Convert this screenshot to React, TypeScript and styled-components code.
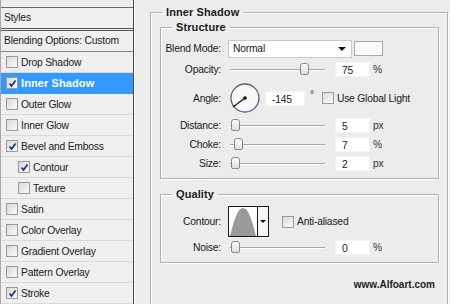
import React from 'react';
import styled, { createGlobalStyle } from 'styled-components';

const GlobalStyle = createGlobalStyle`
  html, body {
    margin: 0;
    padding: 0;
    background: #ececec;
    overflow: hidden;
  }
  body {
    font-family: Tahoma, "Liberation Sans", Arial, sans-serif;
    font-size: 10.3px;
    letter-spacing: -0.2px;
    color: #1a1a1a;
  }
`;

const Dialog = styled.div`
  display: flex;
  width: 450px;
  height: 304px;
  overflow: hidden;
  background: #ececec;
`;

const Sidebar = styled.div`
  width: 132px;
  flex: none;
  padding-top: 7px;
  border-left: 1px solid #a8a8a8;
  border-right: 1px solid #4a4a4a;
  box-shadow: 1px 0 0 #fff;
  display: flex;
  flex-direction: column;
`;

const StylesHead = styled.div`
  height: 20px;
  line-height: 20px;
  padding-left: 3px;
  border-top: 1px solid #6a6a6a;
  border-bottom: 1px solid #5a5a5a;
  background: #efefef;
`;

const ListTop = styled.div`
  height: 1px;
  margin-top: 1px;
  background: #5a5a5a;
`;

const BlendRow = styled.div`
  height: 20px;
  line-height: 20px;
  padding-left: 3px;
  border-bottom: 1px solid #8a8a8a;
  background: #efefef;
`;

const Row = styled.div<{ $active?: boolean; $indent?: boolean }>`
  height: 20px;
  flex: none;
  display: flex;
  align-items: center;
  gap: 3px;
  padding-left: ${p => (p.$indent ? 17 : 5)}px;
  border-bottom: 1px solid ${p => (p.$active ? '#3399ff' : '#dadada')};
  background: ${p => (p.$active ? '#3399ff' : '#efefef')};
  color: ${p => (p.$active ? '#fff' : '#1a1a1a')};
  font-weight: ${p => (p.$active ? 'bold' : 'normal')};
  font-size: ${p => (p.$active ? '11px' : 'inherit')};
  letter-spacing: ${p => (p.$active ? '0.1px' : 'inherit')};
`;

const Box = styled.span`
  width: 10px;
  height: 10px;
  flex: none;
  display: inline-flex;
  align-items: center;
  justify-content: center;
  border: 1px solid #9a9a9a;
  background: linear-gradient(135deg, #d8d8d8, #fcfcfc);
`;

const Check = ({ on }: { on?: boolean }) => (
  <Box>
    {on && (
      <svg width="9" height="9" viewBox="0 0 9 9">
        <path d="M1.5 4.5 L3.5 7 L7.5 1.5" fill="none" stroke="#1f3a7a" strokeWidth="1.8" />
      </svg>
    )}
  </Box>
);

const Main = styled.div`
  flex: 1;
  padding: 6px 2px 0 16px;
`;

const Group = styled.fieldset`
  margin: 0;
  padding: 0;
  border: 1px solid #b0b0b0;
  box-shadow: inset 1px 1px 0 #fff, 1px 1px 0 #fff;
`;

const Outer = styled(Group)`
  height: 320px;
`;

const Body = styled.div`
  padding: 2px 8px 0 9px;
`;

const Legend = styled.legend`
  font-weight: bold;
  font-size: 11px;
  letter-spacing: 0.1px;
  padding: 0 4px;
  margin-left: 11px;
  line-height: 13px;
  color: #1a1a1a;
`;

const Section = styled(Group)`
  padding: 4px 0 5px 0;
  & + & {
    margin-top: 9px;
  }
`;

const Grid = styled.div`
  display: grid;
  grid-template-columns: 60px auto;
  column-gap: 7px;
  align-items: center;
`;

const Label = styled.div`
  text-align: right;
  white-space: nowrap;
`;

const Ctrl = styled.div<{ $h: number }>`
  height: ${p => p.$h}px;
  display: flex;
  align-items: center;
`;

const Select = styled.div`
  width: 124px;
  height: 18px;
  border: 1px solid #c8c8c8;
  background: #fff;
  display: flex;
  align-items: center;
  justify-content: space-between;
  padding: 0 5px 0 4px;
  box-sizing: border-box;
`;

const Arrow = styled.span`
  width: 0;
  height: 0;
  border-left: 4px solid transparent;
  border-right: 4px solid transparent;
  border-top: 4px solid #111;
`;

const Swatch = styled.div`
  width: 29px;
  height: 15px;
  margin-left: 2px;
  border: 1px solid #a8a8a8;
  box-sizing: border-box;
  background: #fafafa;
`;

const Track = styled.div`
  position: relative;
  width: 95px;
  height: 1px;
  margin-left: 2px;
  background: #a6a6a6;
  box-shadow: 0 1px 0 #fff;
`;

const Thumb = styled.div`
  position: absolute;
  top: -6px;
  width: 7px;
  height: 10px;
  border: 1px solid #8a8a8a;
  border-radius: 3px 3px 2px 2px;
  background: linear-gradient(#fff, #dedede);
`;

const Field = styled.div<{ $w?: number; $gap?: number }>`
  width: ${p => p.$w ?? 35}px;
  height: 15px;
  box-sizing: border-box;
  margin-left: ${p => p.$gap ?? 10}px;
  padding-left: 6px;
  line-height: 15px;
  background: #fff;
  border: 1px solid #f4f4f4;
`;

const Unit = styled.span`
  margin-left: 3px;
  color: #333;
`;

const Degree = styled.span`
  align-self: flex-start;
  margin: 9px 0 0 5px;
  color: #333;
`;

const Dial = styled.div`
  width: 30px;
  height: 30px;
  margin-left: 2px;
  flex: none;
`;

const CheckLabel = styled.label<{ $gap: number }>`
  display: flex;
  align-items: center;
  gap: 3px;
  margin-left: ${p => p.$gap}px;
`;

const ContourBox = styled.div`
  display: flex;
  height: 31px;
  border: 1px solid #1a1a1a;
  box-sizing: border-box;
  background: #fff;
`;

const ContourDrop = styled.div`
  width: 10px;
  border-left: 1px solid #1a1a1a;
  display: flex;
  align-items: center;
  justify-content: center;
  background: #f4f4f4;
`;

const SmallArrow = styled(Arrow)`
  border-width: 3px 3px 0;
`;

const Credit = styled.div`
  margin-top: 16px;
  padding-right: 4px;
  text-align: right;
  font-weight: bold;
  font-size: 10px;
  letter-spacing: 0;
  color: #222;
`;

const Slider = ({ at }: { at: number }) => (
  <Track>
    <Thumb style={{ left: at }} />
  </Track>
);

const SliderRow = ({ label, at, value, unit, h }: { label: string; at: number; value: string; unit: string; h: number }) => (
  <>
    <Label>{label}</Label>
    <Ctrl $h={h}>
      <Slider at={at} />
      <Field>{value}</Field>
      <Unit>{unit}</Unit>
    </Ctrl>
  </>
);

const styles = [
  { name: 'Drop Shadow' },
  { name: 'Inner Shadow', on: true, active: true },
  { name: 'Outer Glow' },
  { name: 'Inner Glow' },
  { name: 'Bevel and Emboss', on: true },
  { name: 'Contour', on: true, indent: true },
  { name: 'Texture', indent: true },
  { name: 'Satin' },
  { name: 'Color Overlay' },
  { name: 'Gradient Overlay' },
  { name: 'Pattern Overlay' },
  { name: 'Stroke', on: true },
];

export default function App() {
  return (
    <Dialog>
      <GlobalStyle />
      <Sidebar>
        <StylesHead>Styles</StylesHead>
        <ListTop />
        <BlendRow>Blending Options: Custom</BlendRow>
        {styles.map(s => (
          <Row key={s.name} $active={s.active} $indent={s.indent}>
            <Check on={s.on} />
            {s.name}
          </Row>
        ))}
      </Sidebar>

      <Main>
        <Outer>
          <Legend>Inner Shadow</Legend>
          <Body>
            <Section>
              <Legend>Structure</Legend>
              <Grid>
                <Label>Blend Mode:</Label>
                <Ctrl $h={21}>
                  <Select>
                    Normal
                    <Arrow />
                  </Select>
                  <Swatch />
                </Ctrl>

                <SliderRow label="Opacity:" at={70} value="75" unit="%" h={21} />

                <Label>Angle:</Label>
                <Ctrl $h={36}>
                  <Dial>
                    <svg width="30" height="30" viewBox="0 0 30 30">
                      <circle cx="15" cy="15" r="14" fill="#f7f7f7" stroke="#56607a" strokeWidth="1.3" />
                      <line x1="15" y1="15" x2="3" y2="24" stroke="#111" strokeWidth="1.2" />
                      <circle cx="15" cy="15" r="1.8" fill="#111" />
                    </svg>
                  </Dial>
                  <Field $w={40} $gap={5}>-145</Field>
                  <Degree>°</Degree>
                  <CheckLabel $gap={8}>
                    <Check />
                    Use Global Light
                  </CheckLabel>
                </Ctrl>

                <SliderRow label="Distance:" at={1} value="5" unit="px" h={19} />
                <SliderRow label="Choke:" at={4} value="7" unit="%" h={19} />
                <SliderRow label="Size:" at={1} value="2" unit="px" h={19} />
              </Grid>
            </Section>

            <Section>
              <Legend>Quality</Legend>
              <Grid>
                <Label>Contour:</Label>
                <Ctrl $h={33}>
                  <ContourBox>
                    <svg width="28" height="29" viewBox="0 0 28 29">
                      <path d="M1 29 C6 10 9 1 14 1 C19 1 22 10 27 29 Z" fill="#9a9a9a" />
                    </svg>
                    <ContourDrop>
                      <SmallArrow />
                    </ContourDrop>
                  </ContourBox>
                  <CheckLabel $gap={13}>
                    <Check />
                    Anti-aliased
                  </CheckLabel>
                </Ctrl>
                <SliderRow label="Noise:" at={1} value="0" unit="%" h={19} />
              </Grid>
            </Section>

            <Credit>www.Alfoart.com</Credit>
          </Body>
        </Outer>
      </Main>
    </Dialog>
  );
}
